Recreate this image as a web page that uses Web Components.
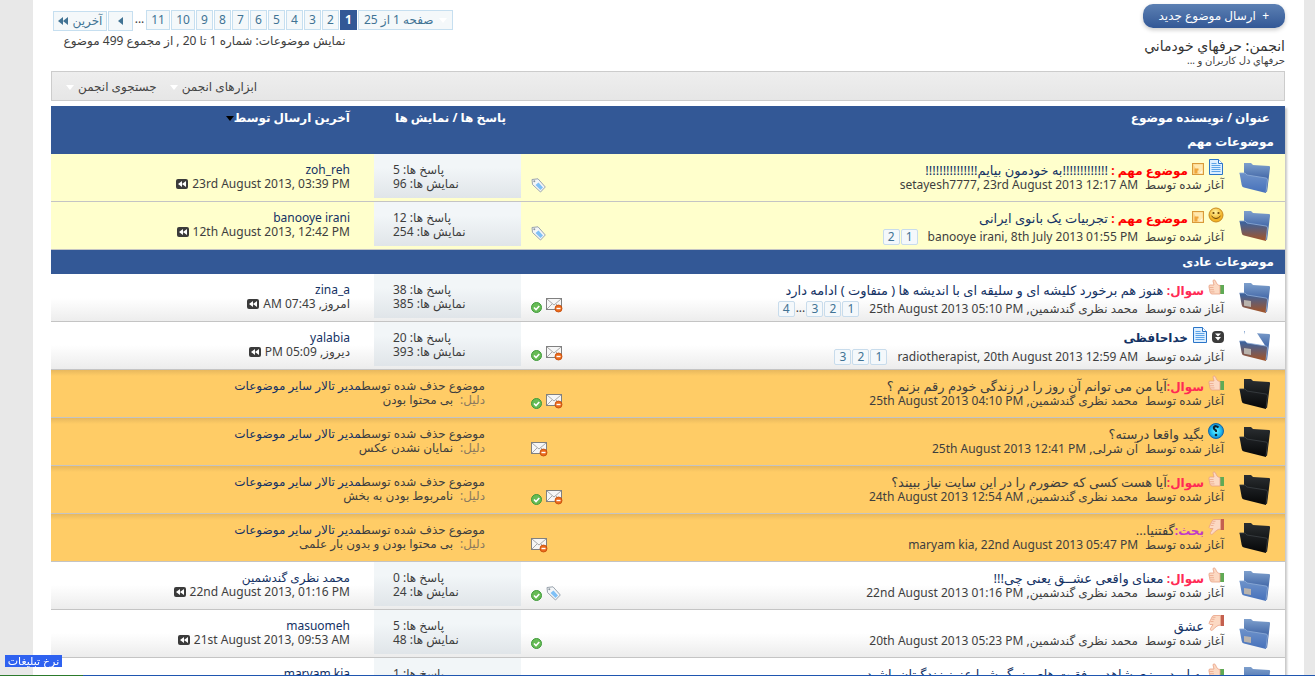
<!DOCTYPE html>
<html lang="fa" dir="rtl">
<head>
<meta charset="utf-8">
<title>حرفهاي خودماني</title>
<style>
  html { background: #e8e8e8; }
  body { margin: 0; font: 12px/14px "Noto Sans", "DejaVu Sans", sans-serif; color: #3e3e3e; overflow: hidden; }
</style>
</head>
<body>
<forum-app></forum-app>
<script>
const ICONS = {
  folder: `<svg width="34" height="36" viewBox="0 0 34 36"><defs>
    <linearGradient id="b" x1="0" y1="0" x2="0" y2="1"><stop offset="0" class="r"/><stop offset=".6" class="s"/></linearGradient>
    <linearGradient id="f" x1="0" y1="0" x2="0" y2="1"><stop offset=".1" class="t"/><stop offset=".9" class="u"/></linearGradient></defs>
    <path d="M6 4 L13 4 L15 6 L31 7 Q32.500 7 32 9 L29 33 L6 24Z" fill="url(#b)"/>
    <path class="paper" d="M3 18 L7 4 L17 3 L28 20Z" fill="#fff"/>
    <path d="M1.500 14 L7 14 L9 16 L28 19 Q29.500 19 29.500 21 L28 34 L6 28.500Q4 28 3.700 26Z" fill="url(#f)"/>
    <path class="edge" d="M1.500 14 L7 14 L9 16 L28 19 Q29.500 19 29.500 21 L28 33" fill="none" stroke-width=".8"/>
    <path class="dot" d="M6 21l7 1v6l-7-1.200z" fill="#b9b3ad"/></svg>`,
  doc: `<svg width="16" height="16" viewBox="0 0 16 16"><path d="M1.500.5h9l4 4v11h-13z" fill="#dceeff" stroke="#2a75c8"/><path d="M10.500.5v4h4" fill="#fff" stroke="#2a75c8"/><path d="M3.500 4.500h5M3.500 6.500h9M3.500 8.500h9M3.500 10.500h9M3.500 12.500h9" stroke="#5da4e8"/></svg>`,
  note: `<svg width="12" height="12" viewBox="0 0 12 12"><rect x=".5" y=".5" width="11" height="11" fill="#fbd488" stroke="#d99a3a"/><path d="M1.500 1.500h9v5l-5 4H4V6z" fill="#ffe9b0"/><path d="M2.500 5.500h4v2h-1v3h-3z" fill="#efa63c"/><path d="M6.500 10.500l4-4v4z" fill="#fff8dd"/></svg>`,
  smile: `<svg width="16" height="16" viewBox="0 0 16 16"><defs><radialGradient id="g" cx=".45" cy=".3"><stop offset="0" stop-color="#fff3a0"/><stop offset="1" stop-color="#f2b327"/></radialGradient></defs><circle cx="8" cy="8" r="7" fill="url(#g)" stroke="#c98a1e"/><circle cx="5.500" cy="6" r="1.100" fill="#6a4208"/><circle cx="10.500" cy="6" r="1.100" fill="#6a4208"/><path d="M3.500 9q4.500 5 9 0" fill="none" stroke="#6a4208"/></svg>`,
  up: `<svg width="16" height="16" viewBox="0 0 16 16"><path d="M12 6h4v9h-4z" fill="#5faa55"/><path d="M12 6.500C9 6 9 5 7.500 2 7 .5 5 .5 5 2l1 4H2Q.5 6 1 8l1 5q.5 2 2 2h8z" fill="#fcd9c3" stroke="#e8a184" stroke-width=".8"/><path d="M1.500 8.500h4M2 10.700h4M2.500 12.900h4" stroke="#e8a184" stroke-width=".7"/></svg>`,
  down: `<svg width="16" height="16" viewBox="0 0 16 16"><path d="M12.500 0H16v11h-3.500z" fill="#c4604f"/><path d="M12.500 10C9 10 7 13 4.500 15 3 16 2 15 2.500 13.500L5 9.500H2Q.5 9 1.500 7L4 2q.5-1.500 2-1.500h6.500z" fill="#fcd9c3" stroke="#e8a184" stroke-width=".8"/><path d="M2.500 6.500h3M3.500 4.300h3M4.500 2.300h3" stroke="#e8a184" stroke-width=".7"/></svg>`,
  ask: `<svg width="16" height="16" viewBox="0 0 16 16"><defs><radialGradient id="q"><stop offset="0" stop-color="#6ff4ff"/><stop offset=".6" stop-color="#22c4f6"/><stop offset="1" stop-color="#1488d0"/></radialGradient></defs><circle cx="8" cy="8" r="7.500" fill="url(#q)" stroke="#1268a8"/><path d="M10.500 4.500Q8 2 6 4q-1 2 2 3.500V9" fill="none" stroke="#10222e" stroke-width="2"/><circle cx="8" cy="12" r="1.300" fill="#10222e"/></svg>`,
  moved: `<svg width="12" height="12" viewBox="0 0 12 12"><rect width="12" height="12" rx="4" fill="#3b3b3b"/><path d="M3 2.500h6L6 5.500zM3 6h6L6 9.500z" fill="#fff"/></svg>`,
  last: `<svg width="12" height="10" viewBox="0 0 12 10"><rect width="12" height="10" rx="2" fill="#3b3b3b"/><path d="M6 2v6L2 5zM10 2v6L6 5z" fill="#fff"/></svg>`,
  mail: `<svg width="17" height="15" viewBox="0 0 17 15"><rect x=".5" y=".5" width="15" height="11" fill="#f6f6f6" stroke="#808080"/><path d="M1 1l7 6 7-6M1 11l5-5M15 11l-5-5" fill="none" stroke="#a8a8a8"/><circle cx="12.500" cy="10.500" r="3.500" fill="#ec6a1c" stroke="#c04a08" stroke-width=".8"/><path d="M10.500 10.500h4" stroke="#fff" stroke-width="1.400"/></svg>`,
  ok: `<svg width="11" height="11" viewBox="0 0 11 11"><circle cx="5.500" cy="5.500" r="5" fill="#66bb55" stroke="#3f9a3a"/><path d="M3 5.500l2 2 3.300-3.500" fill="none" stroke="#fff" stroke-width="1.600"/></svg>`,
  tag: `<svg width="15" height="15" viewBox="0 0 15 15"><path d="M1 1.500L7 .8 14.300 9 9.500 14 1.500 6.500z" fill="#f4f6f8" stroke="#9aa4ae" stroke-linejoin="round"/><circle cx="3.300" cy="3.300" r="1" fill="#8d979f"/><path d="M7.500 4.500l4.500 5-2.500 2.500-5-5z" fill="#7fc0f6"/></svg>`,
  caret: `<svg width="8" height="5" viewBox="0 0 8 5"><path d="M0 0h8L4 5z" fill="currentColor"/></svg>`,
  next: `<svg width="5" height="8" viewBox="0 0 5 8"><path d="M5 0v8L0 4z" fill="currentColor"/></svg>`,
  end: `<svg width="10" height="8" viewBox="0 0 10 8"><path d="M5 0v8L0 4zM10 0v8L5 4z" fill="currentColor"/></svg>`
};

const define = (name, css, render) => customElements.define(name, class extends HTMLElement {
  connectedCallback() {
    if (this.shadowRoot) return;
    const root = this.attachShadow({ mode: "open" });
    const tpl = document.createElement("template");
    tpl.innerHTML = `<style>*{box-sizing:border-box}a{color:inherit;text-decoration:none}${css}</style>${render(this)}`;
    root.append(tpl.content.cloneNode(true));
  }
});
const icon = (name, kind = "") => `<forum-icon name="${name}" kind="${kind}"></forum-icon>`;

define("forum-icon", `
  :host { display: inline-flex; flex: none; }
  svg { display: block; }
  .r { stop-color: #7ea0cd; } .s { stop-color: #3d62a4; }
  .t { stop-color: #6a8fc8; } .u { stop-color: #4a74bc; }
  .edge { stroke: #8fadd8; }
  .paper, .dot { display: none; }
  :host([kind~="hot"]) .t { stop-color: #3f629a; }
  :host([kind~="hot"]) .u { stop-color: #9c5530; }
  :host([kind~="mine"]) .dot, :host([kind~="open"]) .paper { display: inline; }
  :host([kind~="deleted"]) .r { stop-color: #2b2f32; }
  :host([kind~="deleted"]) .s { stop-color: #121416; }
  :host([kind~="deleted"]) .t { stop-color: #1d2023; }
  :host([kind~="deleted"]) .u { stop-color: #08090a; }
  :host([kind~="deleted"]) .edge { stroke: #3b4044; }
`, el => ICONS[el.getAttribute("name")]);

define("page-links", `
  :host { display: inline-flex; direction: rtl; margin-inline-start: 3px; gap: 1px; line-height: 14px; }
  a { padding: 0 4px; min-width: 17px; border: 1px solid #c8dcec; border-radius: 2px; background: #f4f8fb; color: #417394; }
`, el => el.getAttribute("pages").split(",").map(p => p === "…" ? "<span>...</span>" : `<a href="#">${p}</a>`).join(""));

define("forum-pager", `
  :host { display: flex; gap: 1px; color: #417394; line-height: 18px; }
  a, button { height: 20px; font: inherit; padding: 0 4px; min-width: 17px; text-align: center; border: 1px solid #c6dff0; background: #f4f8fa; color: #417394; display: flex; align-items: center; justify-content: center; gap: 5px; }
  button { padding: 0 5px; min-width: 94px; } button forum-icon { color: #fff; }
  a.two { min-width: 24px; } a.cur { background: #335896; border-color: #335896; color: #fff; font-weight: bold; }
  a.next { width: 25px; margin-top: 1px; } a.last { padding: 0 3px; min-width: 54px; margin-top: 1px; }
  span { color: #3e3e3e; width: 11px; text-align: center; }
`, () => `<button>${icon("caret")}صفحه 1 از 25</button>` +
  [1,2,3,4,5,6,7,8,9,10,11].map(n => `<a href="#" class="${n === 1 ? "cur" : n > 9 ? "two" : ""}">${n}</a>`).join("") +
  `<span>...</span><a href="#" class="next" aria-label="بعدی">${icon("next")}</a><a href="#" class="last">آخرین${icon("end")}</a>`);

define("forum-top", `
  :host { display: flex; justify-content: space-between; align-items: flex-start; padding: 4px 0 5px; height: 71px; box-sizing: border-box; }
  button { display: block; font: inherit; height: 24px; padding: 0 16px; min-width: 141px; border: 0; border-radius: 10px; color: #fff; background: linear-gradient(#5c80b3, #335896); box-shadow: 0 2px 4px #ccc; }
  h1 { font-size: 14px; line-height: 16px; margin: 10px 0 0; font-weight: 500; color: #333; }
  p { margin: 0; font-size: 10px; line-height: 12px; }
  .side { padding: 6px 2px 0; }
  .side p { font-size: 12px; line-height: 16px; margin: 2px 107px 0 0; }
`, () => `<div><button>+&nbsp; ارسال موضوع جدید</button><h1>انجمن: حرفهاي خودماني</h1><p>حرفهاي دل کاربران و ...</p></div>
  <div class="side"><forum-pager></forum-pager><p>نمایش موضوعات: شماره 1 تا 20 , از مجموع 499 موضوع</p></div>`);

define("forum-tools", `
  :host { display: flex; justify-content: flex-end; gap: 13px; height: 30px; box-sizing: border-box; border: 1px solid #ccc; background: linear-gradient(#eee, #e6e6e6); padding: 2px 14px 0; margin-bottom: 5px; }
  button { font: inherit; color: #444; border: 0; background: none; padding: 0; display: flex; align-items: center; gap: 4px; }
  forum-icon { color: #fff; }
`, () => ["ابزارهای انجمن", "جستجوی انجمن"].map(t => `<button>${t}${icon("caret")}</button>`).join(""));

define("thread-title", `
  :host { display: flex; gap: 14px; height: 47px; padding: 6px 13px 0; box-sizing: border-box; }
  forum-icon[name=folder] { margin-top: -1px; }
  .text { flex: 1; min-width: 0; white-space: nowrap; }
  .line { display: flex; gap: 4px; height: 18px; align-items: flex-start; }
  .line forum-icon { margin-top: -1px; }
  .line forum-icon[name=note], .line forum-icon[name=moved] { margin-top: 3px; }
  h3 { margin: 3px 0 0; font-size: 13px; line-height: 14px; font-weight: normal; color: #143264; }
  b { font-size: 12px; }
  :host([deleted]) h3 { color: #3e3e3e; }
  .sticky { color: red; } .q { color: #ff2a55; } .d { color: #c03ac8; }
  .by { display: flex; gap: 7px; line-height: 14px; align-items: center; }
  :host([pages]) .by { padding-top: 3px; }
  h3.bold { font-weight: 600; font-size: 12px; }
`, el => {
  const a = n => el.getAttribute(n) || "";
  const tag = { sticky: "موضوع مهم :", q: "سوال:", d: "بحث:" }[a("tag")];
  const dir = /^[a-z]/i.test(a("author")) ? "ltr" : "rtl";
  return `${icon("folder", a("folder"))}<div class="text"><div class="line">${a("icons").split(" ").filter(Boolean).map(n => icon(n)).join("")}
    <h3 class="${a("strong") ? "bold" : ""}">${tag ? `<b class="${a("tag")}">${tag}</b>${el.hasAttribute("deleted") ? "" : " "}` : ""}<a href="#"><slot></slot></a></h3></div>
    <div class="by"><span>آغاز شده توسط</span><bdi dir="${dir}">${a("author")}, <bdi dir="ltr">${a("date")}</bdi></bdi>${a("pages") ? `<page-links pages="${a("pages")}"></page-links>` : ""}</div></div>`;
});

define("thread-marks", `
  :host { display: flex; gap: 4px; align-items: flex-end; justify-content: flex-end; padding: 0 0 8px 10px; height: 47px; box-sizing: border-box; }
`, el => el.getAttribute("icons").split(" ").map(n => icon(n)).join(""));

define("thread-stats", `
  :host { display: block; height: 44px; margin-bottom: 3px; padding: 9px 0 0 0; box-sizing: border-box; background: linear-gradient(#f2f6f8 30%, #e0e5e9); }
  ul { list-style: none; margin: 0; padding: 0; width: 72px; margin-inline-start: 56px; direction: rtl; }
  li { white-space: nowrap; display: flex; justify-content: flex-end; width: 72px; }
`, el => `<ul><li>پاسخ ها: ${el.getAttribute("replies")}</li><li>نمایش ها: ${el.getAttribute("views")}</li></ul>`);

define("thread-last", `
  :host { display: block; height: 47px; padding: 9px 24px 0; box-sizing: border-box; }
  .who { color: #143264; } div { display: flex; align-items: center; gap: 4px; }
`, el => `<a href="#" class="who">${el.getAttribute("user")}</a><div><span dir="${el.hasAttribute("rel") ? "rtl" : "ltr"}">${el.getAttribute("when")}</span>${icon("last")}</div>`);

define("thread-removed", `
  :host { display: block; height: 47px; padding: 9px 36px 0; box-sizing: border-box; }
  a { color: #143264; } .why { color: #8a7a5e; margin-inline-end: 7px; }
`, el => `<div>موضوع حذف شده توسط<a href="#">مدیر تالار سایر موضوعات</a></div><div><span class="why">دلیل:</span>${el.getAttribute("reason")}</div>`);

const MN = "محمد نظری گندشمین";
const STICKY = [
  { folder: "", icons: "doc note", tag: "sticky", title: "!!!!!!!!!!!!!به خودمون بیایم!!!!!!!!!!!!!!!", author: "setayesh7777", date: "23rd August 2013 12:17 AM", marks: "tag", r: 5, v: 96, user: "zoh_reh", when: "23rd August 2013, 03:39 PM" },
  { folder: "hot", icons: "smile note", tag: "sticky", title: "تجربیات یک بانوی ایرانی", author: "banooye irani", date: "8th July 2013 01:55 PM", pages: "1,2", marks: "tag", r: 12, v: 254, user: "banooye irani", when: "12th August 2013, 12:42 PM" }
];
const NORMAL = [
  { folder: "hot mine", icons: "up", tag: "q", title: "هنوز هم برخورد کلیشه ای و سلیقه ای با اندیشه ها ( متفاوت ) ادامه دارد", author: MN, date: "25th August 2013 05:10 PM", pages: "1,2,3,…,4", marks: "mail ok", r: 38, v: 385, user: "zina_a", when: "امروز, 07:43 AM", rel: 1 },
  { folder: "hot mine open", icons: "moved doc", strong: 1, title: "خداحافظی", author: "radiotherapist", date: "20th August 2013 12:59 AM", pages: "1,2,3", marks: "mail ok", r: 20, v: 393, user: "yalabia", when: "دیروز, 05:09 PM", rel: 1 },
  { del: "بی محتوا بودن", icons: "up", tag: "q", title: "آیا من می توانم آن روز را در زندگی خودم رقم بزنم ؟", author: MN, date: "25th August 2013 04:10 PM", marks: "mail ok" },
  { del: "نمایان نشدن عکس", icons: "ask", title: "بگید واقعا درسته؟", author: "آن شرلی", date: "25th August 2013 12:41 PM", marks: "mail" },
  { del: "نامربوط بودن به بخش", icons: "up", tag: "q", title: "آیا هست کسی که حضورم را در این سایت نیاز ببیند؟", author: MN, date: "24th August 2013 12:54 AM", marks: "mail ok" },
  { del: "بی محتوا بودن و بدون بار علمی", icons: "down", tag: "d", title: "گفتنیا...", author: "maryam kia", date: "22nd August 2013 05:47 PM", marks: "mail" },
  { folder: "mine", icons: "up", tag: "q", title: "معنای واقعی عشــق یعنی چی!!!", author: MN, date: "22nd August 2013 01:16 PM", marks: "tag ok", r: 0, v: 24, user: MN, when: "22nd August 2013, 01:16 PM" },
  { folder: "mine", icons: "down", title: "عشق", author: MN, date: "20th August 2013 05:23 PM", marks: "ok", r: 5, v: 48, user: "masuomeh", when: "21st August 2013, 09:53 AM" },
  { folder: "mine", icons: "up", title: "به امید روزی شاهد موفقیت های بزرگ شما عزیز زندگیتان باشید", author: MN, date: "20th August 2013 01:10 PM", marks: "ok", r: 1, v: 30, user: "maryam kia", when: "21st August 2013, 08:30 AM" }
];
const row = (t, sticky) => `<tr class="${t.del ? "del" : sticky ? "sticky" : ""}">
  <td><thread-title ${t.del ? "deleted" : ""} folder="${t.del ? "deleted" : t.folder}" icons="${t.icons}" tag="${t.tag || ""}" strong="${t.strong || ""}" author="${t.author}" date="${t.date}" ${t.pages ? `pages="${t.pages}"` : ""}>${t.title}</thread-title></td>
  <td><thread-marks icons="${t.marks}"></thread-marks></td>
  ${t.del ? `<td colspan="2"><thread-removed reason="${t.del}"></thread-removed></td>`
    : `<td><thread-stats replies="${t.r}" views="${t.v}"></thread-stats></td><td><thread-last user="${t.user}" when="${t.when}" ${t.rel ? "rel" : ""}></thread-last></td>`}</tr>`;

define("thread-list", `
  :host { display: block; box-shadow: 2px 2px 2px #c8c8c8; }
  table { width: 100%; border-collapse: collapse; table-layout: fixed; }
  td, th { padding: 0; vertical-align: top; text-align: start; }
  .marks { width: 60px; } .stats { width: 147px; } .last { width: 323px; }
  thead th, .sec th { background: #335896; color: #fff; height: 24px; font-size: 12px; font-weight: bold; vertical-align: middle; white-space: nowrap; }
  thead th { padding: 0 15px; } thead th.last { padding: 0 24px; } .sec th { padding: 0 11px; }
  thead th forum-icon { color: #000; vertical-align: middle; }
  tbody tr:not(.sec) td { border-bottom: 1px solid #c4c4c4; }
  tbody tr:not(.sec) { background: linear-gradient(#fff 50%, #ececec); }
  tbody tr.sticky:not(.sec) { background: #ffffcc; }
  tbody tr.del:not(.sec) { background: linear-gradient(#e4b55c, #ffcc66 7px); }
`, () => `<table><thead><tr><th>عنوان / نویسنده موضوع</th><th class="marks"></th><th class="stats">پاسخ ها / نمایش ها</th><th class="last">آخرین ارسال توسط${icon("caret")}</th></tr></thead>
  <tbody><tr class="sec"><th colspan="4">موضوعات مهم</th></tr>${STICKY.map(t => row(t, true)).join("")}
  <tr class="sec"><th colspan="4">موضوعات عادی</th></tr>${NORMAL.map(t => row(t)).join("")}</tbody></table>`);

define("ad-bar", `
  :host { position: fixed; left: 0; right: 0; bottom: 0; padding: 0 5px 8px; direction: ltr; pointer-events: none; background: linear-gradient(90deg, #2c7a2c 83px, #1f56b0 83px) bottom / 100% 1px no-repeat; }
  a { display: inline-block; background: #2f62f0; color: #fff; font-size: 11px; line-height: 12px; min-width: 57px; text-align: center; pointer-events: auto; }
`, () => `<a href="#">نرخ تبلیغات</a>`);

define("forum-app", `
  :host { display: block; height: 100vh; overflow: hidden; }
  main { background: #fff; margin: 0 11px 0 33px; padding: 0 19px 0 18px; min-height: 100%; }
`, () => `<main><forum-top></forum-top><forum-tools></forum-tools><thread-list></thread-list></main><ad-bar></ad-bar>`);
</script>
</body>
</html>
